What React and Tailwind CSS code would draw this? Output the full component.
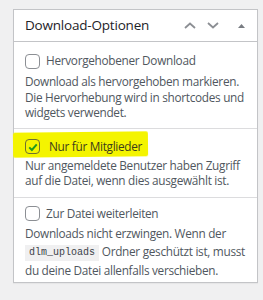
import React from "react";

const Check = ({ checked }) => (
  <span
    className={`relative flex w-[15px] h-[15px] shrink-0 items-center justify-center rounded-[4px] border ${
      checked ? "border-[#6f7030]" : "border-[#8c8f94] bg-white"
    }`}
  >
    {checked && (
      <svg viewBox="0 0 16 16" className="w-[12px] h-[12px]">
        <path d="M3 8.5 L6.5 12 L13 4.5" fill="none" stroke="#1e9a1e" strokeWidth="2.6" />
      </svg>
    )}
  </span>
);

const Option = ({ label, checked, highlight, className, labelGap = "ml-[6px]", children }) => (
  <div className={`relative px-[11px] text-[#50575e] ${className}`}>
    {highlight && (
      <span className="absolute left-[-1px] top-[3px] w-[135px] h-[25px] bg-[#f4f400] rounded-[2px] blur-[0.6px] -rotate-[0.6deg]" />
    )}
    <label className="relative flex h-[20px] items-center">
      <Check checked={checked} />
      <span className={`${labelGap} ${checked ? "text-[#3c3c1c]" : ""}`}>{label}</span>
    </label>
    <p className="leading-[15.5px]">{children}</p>
  </div>
);

export default function App() {
  return (
    <div
      className="w-[263px] h-[300px] bg-[#f0f0f1] pt-[9px] pl-[13px] text-[11.8px] tracking-[-0.3px]"
      style={{ fontFamily: '"Open Sans", "Liberation Sans", sans-serif' }}
    >
      <div className="w-[245px] h-[274px] bg-white border border-[#c3c4c7] shadow-[0_1px_1px_rgba(0,0,0,0.04)]">
        <div className="flex h-[32px] items-center border-b border-[#c3c4c7] pl-[11px] pr-[11px]">
          <h2 className="flex-1 text-[13.5px] tracking-[-0.2px] text-[#1d2327]">Download-Optionen</h2>
          <svg viewBox="0 0 12 7" className="w-[12px] h-[7px] mr-[11px]">
            <path d="M1 6 L6 1.5 L11 6" fill="none" stroke="#8c8f94" strokeWidth="1.8" />
          </svg>
          <svg viewBox="0 0 12 7" className="w-[12px] h-[7px] mr-[19px]">
            <path d="M1 1 L6 5.5 L11 1" fill="none" stroke="#8c8f94" strokeWidth="1.8" />
          </svg>
          <svg viewBox="0 0 7 4" className="w-[7px] h-[4px] mr-[1px]">
            <path d="M0 4 L3.5 0 L7 4 Z" fill="#787c82" />
          </svg>
        </div>

        <Option label="Hervorgehobener Download" className="pt-[9px] pb-[7px] border-b border-[#dcdcde]">
          <span className="block mt-[3px]">
            Download als hervorgehoben markieren. Die Hervorhebung wird in shortcodes und widgets verwendet.
          </span>
        </Option>

        <Option
          label="Nur für Mitglieder"
          checked
          highlight
          labelGap="ml-[9px]"
          className="pt-[8px] pb-[8px] border-b border-[#dcdcde]"
        >
          <span className="block mt-[1px]">
            Nur angemeldete Benutzer haben Zugriff auf die Datei, wenn dies ausgewählt ist.
          </span>
        </Option>

        <Option label="Zur Datei weiterleiten" className="pt-[6px]">
          <span className="block leading-[18.5px]">
            Downloads nicht erzwingen. Wenn der
            <br />
            <span className="whitespace-nowrap">
              <code
                className="inline-block h-[16px] bg-[#f0f0f1] px-[4px] text-[10px] leading-[16px] tracking-normal text-[#3c434a] align-middle"
                style={{ fontFamily: '"Liberation Mono", "DejaVu Sans Mono", monospace' }}
              >
                dlm_uploads
              </code>{" "}
              Ordner geschützt ist, musst
            </span>
            <br />
            du deine Datei allenfalls verschieben.
          </span>
        </Option>
      </div>
    </div>
  );
}
